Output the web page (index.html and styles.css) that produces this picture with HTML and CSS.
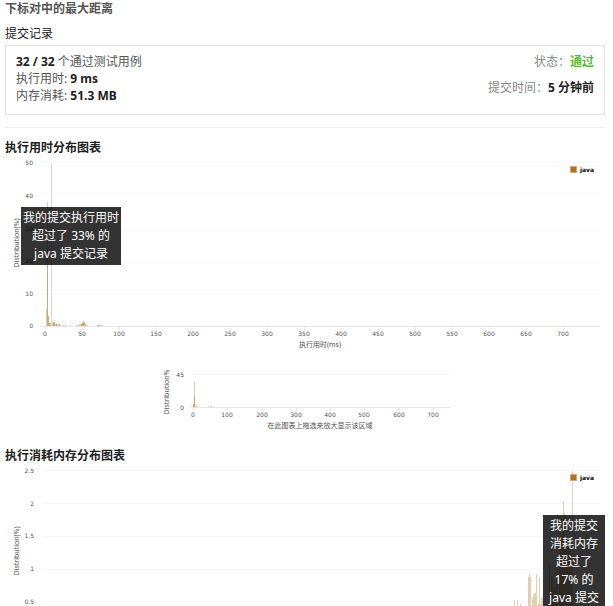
FILE: index.html
```html
<!DOCTYPE html>
<html lang="zh-CN">
<head>
<meta charset="utf-8">
<title>提交记录</title>
<link rel="stylesheet" href="styles.css">
</head>
<body>
<main class="page">
  <h1 class="problem">下标对中的最大距离</h1>
  <h2 class="subtitle">提交记录</h2>
  <section class="result">
    <div class="result-main">
      <div><strong>32 / 32</strong> 个通过测试用例</div>
      <div>执行用时: <strong>9 ms</strong></div>
      <div>内存消耗: <strong>51.3 MB</strong></div>
    </div>
    <div class="result-side">
      <div>状态：<strong class="accepted">通过</strong></div>
      <div>提交时间：<strong>5 分钟前</strong></div>
    </div>
  </section>
  <hr class="divider">

  <section class="chart">
    <h3 class="chart-title">执行用时分布图表</h3>
    <div class="plot">
      <svg class="graph" viewBox="0 1 600 198" role="img" aria-label="执行用时分布图表">
        <path class="grid" d="M35 7.500H595M35 40.500H595M35 73.500H595M35 105.500H595M35 138.500H595"/>
        <path class="axis" d="M35 171.500H595M40.500 171v4M77.500 171v4M114.500 171v4M151.500 171v4M188.500 171v4M225.500 171v4M262.500 171v4M299.500 171v4M336.500 171v4M373.500 171v4M410.500 171v4M447.500 171v4M484.500 171v4M521.500 171v4M558.500 171v4"/>
        <path class="bar" d="M42 95h1v76h-1zM43 161h1v10h-1zM44 168h1v3h-1zM46 169h1v2h-1zM48 167h2v4h-2zM51 169h1v2h-1zM54 169h1v2h-1zM76 169h1v2h-1zM77 168h1v3h-1zM78 167h1v4h-1zM79 168h1v3h-1zM93 170h2v1h-2z"/>
        <path class="bar light" d="M42 47h1v124h-1zM41 154h2v17h-2zM43 161h1v10h-1zM44 168h4v3h-4zM48 167h2v4h-2zM50 169h5v2h-5zM57 170h3v1h-3zM61 170h1v1h-1zM65 170h1v1h-1zM71 170h12v1h-12zM74 169h7v2h-7zM77 167h3v4h-3zM78 166h1v5h-1zM92 170h6v1h-6z"/>
        <path class="mine" d="M46.500 8V171"/>
        <g class="tick end"><text x="28" y="10">50</text><text x="28" y="43">40</text><text x="28" y="76">30</text><text x="28" y="108">20</text><text x="28" y="141">10</text><text x="28" y="173">0</text></g>
        <g class="tick middle"><text x="40" y="181">0</text><text x="77" y="181">50</text><text x="114" y="181">100</text><text x="151" y="181">150</text><text x="188" y="181">200</text><text x="225" y="181">250</text><text x="262" y="181">300</text><text x="299" y="181">350</text><text x="336" y="181">400</text><text x="373" y="181">450</text><text x="410" y="181">500</text><text x="447" y="181">550</text><text x="484" y="181">600</text><text x="521" y="181">650</text><text x="558" y="181">700</text></g>
        <text class="label" transform="translate(14 88) rotate(-90)">Distribution(%)</text>
        <text class="label" x="315" y="192">执行用时(ms)</text>
        <rect class="swatch" x="565.500" y="11.500" width="6" height="6"/>
        <text class="legend" x="575" y="17">java</text>
      </svg>
      <div class="tip tip-time">我的提交执行用时<br>超过了 33% 的<br>java 提交记录</div>
    </div>
    <svg class="graph overview" viewBox="0 1 600 88" role="img" aria-label="执行用时缩略图表">
      <path class="grid" d="M186 21.500H445"/>
      <path class="axis" d="M186 54.500H445M188.500 54v4M222.500 54v4M257.500 54v4M291.500 54v4M325.500 54v4M359.500 54v4M394.500 54v4M428.500 54v4"/>
      <path class="bar" d="M189 42h1v12h-1zM188 51h1v3h-1z"/>
      <path class="bar light" d="M189 29h1v25h-1zM188 51h3v3h-3zM191 53h2v1h-2zM205 53h2v1h-2z"/>
      <g class="tick end"><text x="179" y="24">45</text><text x="179" y="57">0</text></g>
      <g class="tick middle"><text x="188" y="64">0</text><text x="222" y="64">100</text><text x="257" y="64">200</text><text x="291" y="64">300</text><text x="325" y="64">400</text><text x="359" y="64">500</text><text x="394" y="64">600</text><text x="428" y="64">700</text></g>
      <text class="label" transform="translate(164 39) rotate(-90)">Distribution%</text>
      <text class="label" x="315" y="75">在此图表上拖选来放大显示该区域</text>
    </svg>
  </section>

  <section class="chart">
    <h3 class="chart-title">执行消耗内存分布图表</h3>
    <div class="plot">
      <svg class="graph" viewBox="0 1 600 198" role="img" aria-label="执行消耗内存分布图表">
        <path class="grid" d="M37 7.500H595M37 40.500H595M37 73.500H595M37 106.500H595M37 138.500H595M37 171.500H595"/>
        <path class="bar light" d="M509 137h1v34h-1zM512 137h1v34h-1zM515 141h1v30h-1zM523 114h2v57h-2zM524 111h1v60h-1zM525 114h1v57h-1zM527 136h2v35h-2zM528 133h4v38h-4zM529 130h3v41h-3zM531 111h1v60h-1zM534 114h1v57h-1zM533 141h3v30h-3zM536 135h2v36h-2zM544 100h1v71h-1zM546 113h2v58h-2zM548 124h3v47h-3zM551 105h2v66h-2zM554 86h2v85h-2zM556 72h2v99h-2zM558 38h1v133h-1zM559 50h1v121h-1zM560 80h3v91h-3zM563 85h2v86h-2zM565 105h3v66h-3z"/>
        <path class="mine" d="M567.500 8V171"/>
        <g class="tick end"><text x="29" y="10">2.5</text><text x="29" y="43">2</text><text x="29" y="75">1.5</text><text x="29" y="108">1</text><text x="29" y="141">0.5</text><text x="29" y="173">0</text></g>
        <text class="label" transform="translate(14 88) rotate(-90)">Distribution(%)</text>
        <rect class="swatch" x="565.500" y="11.500" width="6" height="6"/>
        <text class="legend" x="575" y="17">java</text>
      </svg>
      <div class="tip tip-memory">我的提交<br>消耗内存<br>超过了<br>17% 的<br>java 提交<br>记录</div>
    </div>
  </section>
</main>
</body>
</html>
```

FILE: styles.css
```css
body {
  margin: 0;
  background: #fff;
  color: #212121;
  font: 12px/17px "Noto Sans", "Noto Sans CJK SC", sans-serif;
}

.page {
  padding: 0 8px 0 5px;
}

h1, h2, h3 {
  margin: 0;
  font-size: 12px;
  line-height: 16px;
}

.problem {
  color: #555;
  font-weight: 700;
  line-height: 18px;
}

.subtitle {
  margin: 8px 0 3px;
  font-weight: 400;
}

.result {
  display: flex;
  justify-content: space-between;
  padding: 7px 10px 10px;
  border: 1px solid #e3e3e3;
}

.result-main {
  color: #555;
}

.result strong {
  color: #212121;
}

.result-side {
  display: grid;
  align-content: start;
  gap: 9px;
  color: #888;
  text-align: right;
}

.result .accepted {
  color: #5cb832;
}

.divider {
  margin: 12px 0;
  border: 0;
  border-top: 1px solid #eee;
}

.plot {
  position: relative;
}

.graph {
  display: block;
  width: 100%;
}

.overview {
  margin-bottom: 6px;
}

.grid {
  stroke: #f7f7f7;
}

.axis {
  fill: none;
  stroke: #e6e6e6;
}

.bar {
  fill: #b07219;
  fill-opacity: 0.4;
}

.light {
  fill-opacity: 0.35;
}

.mine {
  stroke: #d6d6d6;
}

.tick {
  fill: #545454;
  font: 6px "DejaVu Sans", sans-serif;
}

.end {
  text-anchor: end;
}

.middle {
  text-anchor: middle;
}

.label {
  fill: #545454;
  font: 7px "Noto Sans", "Noto Sans CJK SC", sans-serif;
  text-anchor: middle;
}

.legend {
  fill: #000;
  font: bold 6px "DejaVu Sans", sans-serif;
}

.swatch {
  fill: #b07219;
  stroke: #d0aa75;
}

.tip {
  position: absolute;
  background: rgba(0, 0, 0, 0.8);
  color: #fff;
  line-height: 18px;
  padding: 2px 0;
  text-align: center;
}

.tip-time {
  top: 51px;
  left: 16px;
  width: 100px;
}

.tip-memory {
  top: 51px;
  right: 0;
  width: 62px;
}
```
